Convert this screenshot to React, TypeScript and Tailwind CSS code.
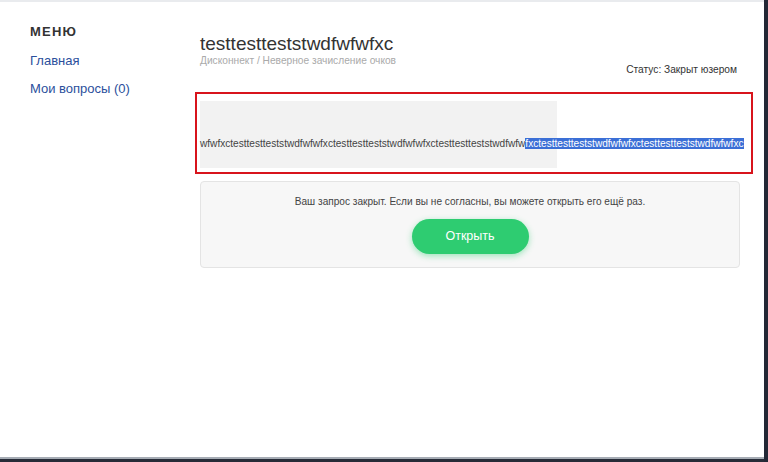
import React from "react";

const UNIT = "testtestteststwdfwfwfxc";
const PLAIN = "wfwfxc" + UNIT + UNIT + "testtestteststwdfwfw";
const SELECTED = "fxc" + UNIT + UNIT;

function Sidebar() {
  return (
    <aside className="w-[195px] shrink-0 pl-[30px] pt-[22px]">
      <div className="text-[13px] leading-[16px] font-bold tracking-[1.2px] text-[#333]">МЕНЮ</div>
      <nav className="mt-[13px] flex flex-col gap-[12px] text-[13px] leading-[16px] text-[#2b4f9c]">
        <a href="#">Главная</a>
        <a href="#">Мои вопросы (0)</a>
      </nav>
    </aside>
  );
}

function TicketHeader() {
  return (
    <div className="flex justify-between">
      <div className="pl-[5px] pt-[31px]">
        <h1 className="text-[19px] leading-[22px] text-[#333]">testtestteststwdfwfwfxc</h1>
        <div className="text-[10.2px] leading-[12px] text-[#aaa]">Дисконнект / Неверное зачисление очков</div>
      </div>
      <div className="pt-[61px] pr-[16px] text-[10.2px] leading-[13px] text-[#333]">Статус: Закрыт юзером</div>
    </div>
  );
}

export default function App() {
  return (
    <div
      className="flex h-[462px] w-[768px] overflow-hidden bg-white"
      style={{ fontFamily: '"Liberation Sans", Arial, sans-serif' }}
    >
      <div className="flex min-w-0 flex-1 flex-col">
        <div className="h-[2px] bg-[#e9ebee]" />
        <div className="flex flex-1">
          <Sidebar />
          <main className="w-[558px] shrink-0">
            <TicketHeader />

            <div className="mt-[16px] h-[82px] border-2 border-[#d8141c] pl-[3px] pt-[7px] pb-[4px]">
              <div className="h-[67px] w-[357px] bg-[#f2f2f2] pt-[35px]">
                <div className="whitespace-nowrap text-[10.1px] leading-[15px] text-[#444]">
                  <span>{PLAIN}</span>
                  <span className="bg-[#3b6fd6] text-white">{SELECTED}</span>
                </div>
              </div>
            </div>

            <div className="ml-[5px] mt-[7px] flex w-[540px] flex-col items-center rounded-[4px] border border-[#e4e4e4] bg-[#f7f7f7] pt-[13px] pb-[13px]">
              <p className="text-[10.1px] leading-[14px] text-[#444]">
                Ваш запрос закрыт. Если вы не согласны, вы можете открыть его ещё раз.
              </p>
              <button className="mt-[10px] h-[35px] w-[117px] rounded-full bg-[#2ecc71] text-[12.5px] text-white shadow-[0_2px_6px_rgba(46,204,113,0.45)]">
                Открыть
              </button>
            </div>
          </main>
        </div>
        <div className="h-[2px] bg-[#a6acb4]" />
        <div className="h-[3px] bg-[#272c38]" />
      </div>
      <div className="w-[4px] shrink-0 bg-[#232836]" />
    </div>
  );
}
